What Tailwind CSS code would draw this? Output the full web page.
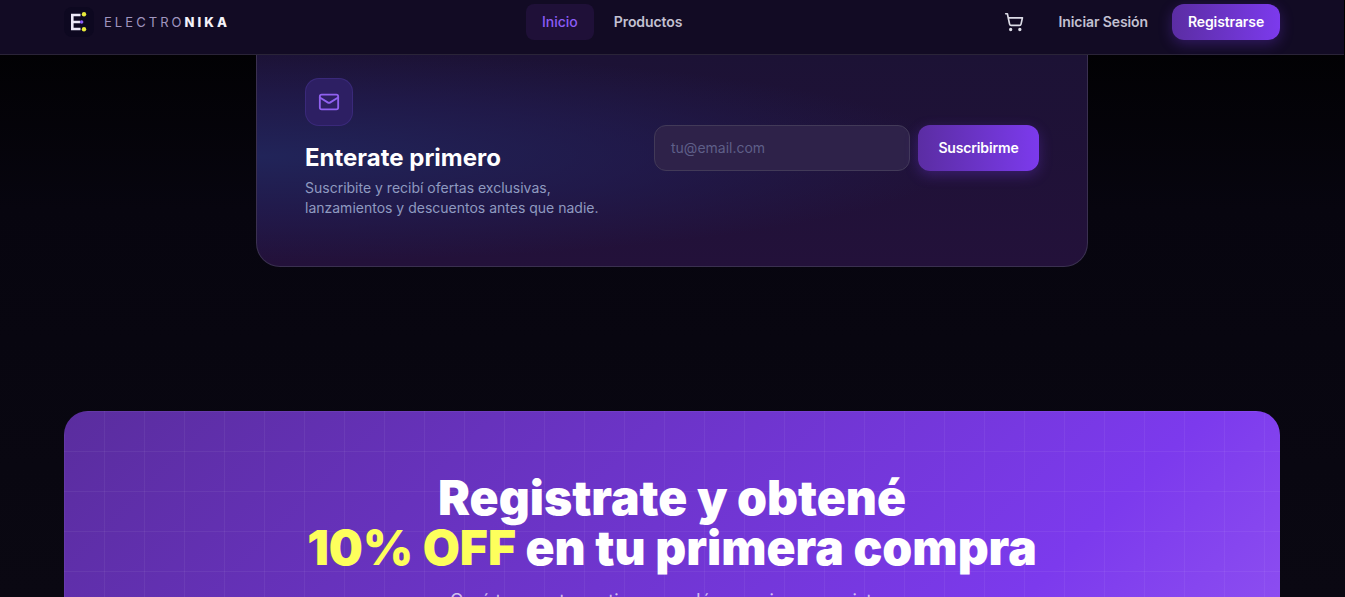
<!DOCTYPE html>
<html lang="es">
<head>
<meta charset="utf-8">
<title>Electronika</title>
<script src="https://cdn.jsdelivr.net/npm/@tailwindcss/browser@4"></script>
</head>
<body class="h-[597px] overflow-hidden bg-[linear-gradient(180deg,#000000_0%,#07050f_35%,#0a0812_100%)] font-['Inter',sans-serif]">
<div class="w-[1344px]">
<nav class="h-[55px] border-b border-[#2a2438] bg-[#120b24]">
  <div class="mx-auto flex h-[44px] w-[1216px] items-center">
    <div class="flex w-[462px] items-center gap-2.5">
      <div class="flex h-[30px] w-[30px] items-center justify-center rounded-lg bg-[#0d0820]">
        <svg width="30" height="30" viewBox="0 0 30 30">
          <path d="M7 8h9.5M7 15h9M7 22h9.5M8.3 6.7v16.6" stroke="#ece8f6" stroke-width="2.6" fill="none"/>
          <circle cx="20" cy="7.3" r="2.2" fill="#e8ea3a"/>
          <circle cx="17.6" cy="15" r="1.8" fill="#8b5cf6"/>
          <circle cx="20" cy="22.3" r="2.2" fill="#e8ea3a"/>
        </svg>
      </div>
      <div class="pt-px text-[13px] tracking-[0.235em] text-[#a095bf]">ELECTRO<span class="font-extrabold text-[#f4f2fa]">NIKA</span></div>
    </div>
    <div class="flex items-center gap-1 text-sm font-medium">
      <a class="flex h-9 items-center rounded-lg bg-[#1f1038] px-4 text-[#8b5cf6]">Inicio</a>
      <a class="flex h-9 items-center px-4 font-semibold tracking-[-0.1px] text-[#c3c1d2]">Productos</a>
    </div>
    <div class="ml-auto flex items-center text-sm font-semibold tracking-[-0.1px]">
      <svg class="mr-[19px]" width="20" height="20" viewBox="0 0 24 24" fill="none" stroke="#dcdce6" stroke-width="2" stroke-linecap="round" stroke-linejoin="round">
        <circle cx="8" cy="21" r="1"/><circle cx="19" cy="21" r="1"/>
        <path d="M2.05 2.05h2l2.66 12.42a2 2 0 0 0 2 1.58h9.78a2 2 0 0 0 1.95-1.57l1.65-7.43H5.12"/>
      </svg>
      <a class="mr-2 flex h-9 items-center px-4 text-[#c3c1d2]">Iniciar Sesión</a>
      <a class="flex h-9 w-[108px] items-center justify-center rounded-xl bg-gradient-to-r from-[#5b2da3] to-[#7c3aed] text-white shadow-[0_4px_14px_rgba(124,58,237,0.3)]">Registrarse</a>
    </div>
  </div>
</nav>
<main>
  <section class="mx-auto flex h-[212px] w-[832px] items-start rounded-b-3xl border border-t-0 border-[#3a3050] bg-[radial-gradient(ellipse_85%_50%_at_0%_48%,#212459_0%,rgba(33,30,85,0.6)_55%,transparent_100%),linear-gradient(180deg,#1c1235_0%,#23113a_100%)] pl-12 pt-[23px]">
    <div class="w-[349px]">
      <div class="flex h-12 w-12 items-center justify-center rounded-[14px] border border-[#43318a]/60 bg-[#2d1f63]">
        <svg width="22" height="22" viewBox="0 0 24 24" fill="none" stroke="#9061f0" stroke-width="2" stroke-linecap="round" stroke-linejoin="round">
          <rect x="2" y="4" width="20" height="16" rx="2"/><path d="m22 7-8.97 5.7a1.94 1.94 0 0 1-2.06 0L2 7"/>
        </svg>
      </div>
      <h2 class="mt-4 text-2xl font-bold leading-8 text-white">Enterate primero</h2>
      <p class="mt-1 text-sm leading-5 text-[#8f9ac0]">Suscribite y recibí ofertas exclusivas,<br>lanzamientos y descuentos antes que nadie.</p>
    </div>
    <form class="mt-[47px] flex gap-2">
      <div class="flex h-[46px] w-[256px] items-center rounded-xl border border-[#423a58] bg-[#2e2249] pl-4 text-sm text-[#5e5f88]">tu@email.com</div>
      <button class="h-[46px] w-[121px] rounded-xl bg-gradient-to-r from-[#5b2da3] to-[#7c3aed] text-sm font-semibold tracking-[-0.15px] text-white shadow-[0_4px_14px_rgba(124,58,237,0.3)]">Suscribirme</button>
    </form>
  </section>
  <section class="relative mx-auto mt-36 h-[420px] w-[1216px] overflow-hidden rounded-3xl bg-[linear-gradient(135deg,#5a2d9e_0%,#7c3aed_70%,#8b4cf0_85%,#a855f7_100%)] pt-[62px] text-center">
    <div class="absolute inset-0 bg-[linear-gradient(rgba(255,255,255,0.05)_1px,transparent_1px),linear-gradient(90deg,rgba(255,255,255,0.05)_1px,transparent_1px)] bg-[size:40px_40px]"></div>
    <h2 class="relative text-5xl font-black leading-[50px] text-white">Registrate y obtené<br><span class="text-[#fdff5c]">10% OFF</span> en tu primera compra</h2>
    <p class="relative mt-3.5 pr-0.5 text-lg text-white/70">Creá tu cuenta gratis y accedé a precios mayoristas</p>
  </section>
</main>
</div>
</body>
</html>
